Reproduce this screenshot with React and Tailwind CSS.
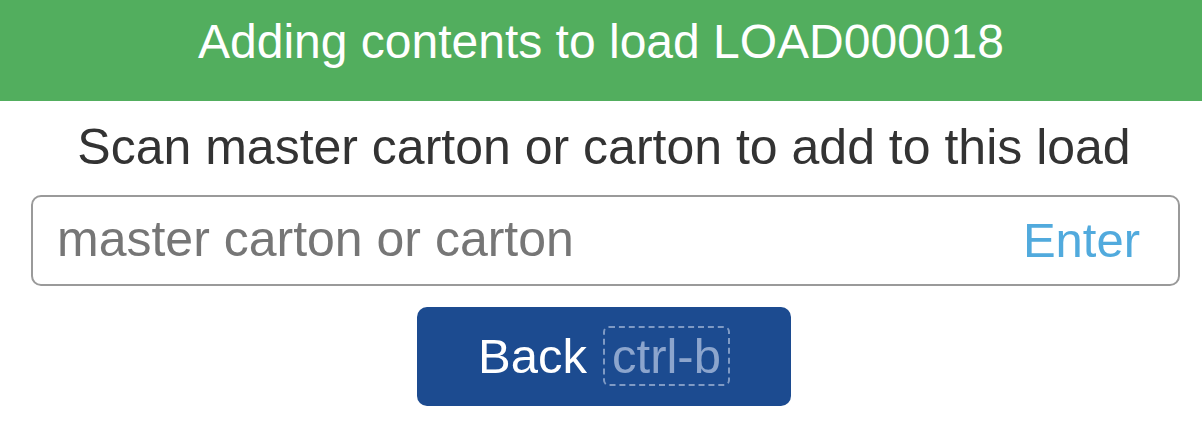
import React, { useState } from 'react';

function App() {
  const [code, setCode] = useState('');

  return (
    <div className="min-h-screen bg-white font-['Liberation_Sans',Arial,sans-serif]">
      {/* header */}
      <div className="h-[101px] bg-[#52ae5e] pt-[14px] text-center text-[48px] leading-[1.15] text-white">
        Adding contents to load LOAD000018
      </div>

      <p className="mt-[18px] pl-[6px] text-center text-[50px] leading-[1.15] text-[#333333]">
        Scan master carton or carton to add to this load
      </p>

      {/* scan input */}
      <div className="mt-[18px] ml-[31px] mr-[22px] flex h-[91px] items-center rounded-[10px] border-2 border-[#9a9a9a] bg-white">
        <input
          type="text"
          value={code}
          onChange={(e) => setCode(e.target.value)}
          placeholder="master carton or carton"
          className="min-w-0 flex-1 bg-transparent pl-[24px] text-[50px] leading-[1.15] text-[#333] placeholder:text-[#767676] focus:outline-none"
        />
        <button className="pr-[38px] text-[49px] leading-[1.15] text-[#51aadd]">Enter</button>
      </div>

      <div className="mt-[21px] flex justify-center pl-[6px]">
        <button className="flex h-[99px] items-center gap-[16px] rounded-[10px] bg-[#1c4b90] px-[61px] text-[49px] leading-[1.15] text-white">
          <span>Back</span>
          <span className="rounded-[6px] border-2 border-dashed border-[#7f9ac4] px-[7px] text-[#8ca5cd]">ctrl-b</span>
        </button>
      </div>
    </div>
  );
}

export default App;
